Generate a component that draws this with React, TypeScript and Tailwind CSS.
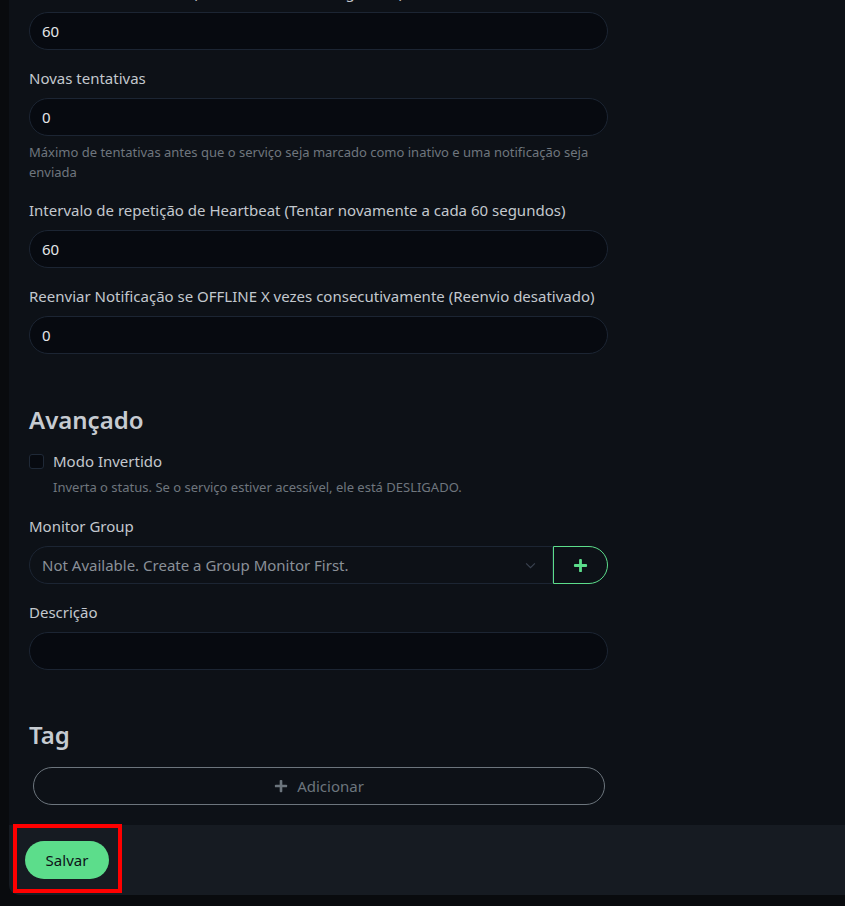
import React from "react";

const PlusIcon = ({ className }: { className?: string }) => (
  <svg viewBox="0 0 16 16" className={className} fill="currentColor">
    <rect x="6.5" y="1" width="3" height="14" rx="1" />
    <rect x="1" y="6.5" width="14" height="3" rx="1" />
  </svg>
);

function Field({ label, value, help }: { label: string; value: string; help?: string }) {
  return (
    <div className="mb-4">
      <div className="mb-2 h-6 leading-6 text-[15px] text-[#c3c8ce] whitespace-nowrap">{label}</div>
      <div className="h-[38px] w-[579px] rounded-full border border-[#1c2533] bg-[#070a10] pl-3 flex items-center text-[15px] text-[#e4e6e9]">
        {value}
      </div>
      {help && (
        <div className="mt-[6px] w-[579px] text-[13px] leading-[20px] text-[#6f767e]">{help}</div>
      )}
    </div>
  );
}

export default function App() {
  return (
    <div className="h-[906px] overflow-hidden bg-[#090b0e] pl-[9px] font-['Noto_Sans',sans-serif]">
      <div className="relative bg-[#0d1117] rounded-bl-[10px]">
        <div className="pl-5 pb-5 -mt-5">
          <Field label="Intervalo de Heartbeat (Verificar a cada 60 segundos)" value="60" />
          <Field
            label="Novas tentativas"
            value="0"
            help="Máximo de tentativas antes que o serviço seja marcado como inativo e uma notificação seja enviada"
          />
          <Field label="Intervalo de repetição de Heartbeat (Tentar novamente a cada 60 segundos)" value="60" />
          <Field label="Reenviar Notificação se OFFLINE X vezes consecutivamente (Reenvio desativado)" value="0" />

          <h2 className="mt-[51px] h-[29px] leading-[29px] text-[24px] font-semibold text-[#c6cbd1]">Avançado</h2>

          <div className="mt-[15px]">
            <div className="flex items-center h-6">
              <div className="w-[15px] h-[15px] rounded-[3px] border border-[#1f2937] bg-[#070a10]" />
              <span className="ml-[9px] text-[15px] text-[#c3c8ce]">Modo Invertido</span>
            </div>
            <div className="mt-1 pl-6 text-[13px] leading-[21px] text-[#6f767e]">
              Inverta o status. Se o serviço estiver acessível, ele está DESLIGADO.
            </div>
          </div>

          <div className="mt-4 mb-2 h-6 leading-6 text-[15px] text-[#c3c8ce]">Monitor Group</div>
          <div className="flex w-[579px] h-[38px]">
            <div className="flex-1 flex items-center justify-between rounded-l-full border border-[#1c2533] bg-[#0d1117] pl-3 pr-4 text-[15px] text-[#8a9098]">
              <span>Not Available. Create a Group Monitor First.</span>
              <svg viewBox="0 0 12 8" className="w-[11px] h-[7px]" fill="none" stroke="#3a4250" strokeWidth="1.3">
                <path d="M1 1.5l5 5 5-5" />
              </svg>
            </div>
            <div className="w-[55px] flex items-center justify-center rounded-r-full border border-[#5cdd8b] text-[#5cdd8b]">
              <PlusIcon className="w-[15px] h-[15px]" />
            </div>
          </div>

          <div className="mt-4 mb-2 h-6 leading-6 text-[15px] text-[#c3c8ce]">Descrição</div>
          <div className="h-[38px] w-[579px] rounded-full border border-[#1c2533] bg-[#070a10]" />

          <h2 className="mt-[50px] h-[29px] leading-[29px] text-[24px] font-semibold text-[#c6cbd1]">Tag</h2>

          <div className="mt-[18px] ml-1 w-[572px] h-[38px] rounded-full border border-[#6c757d] flex items-center justify-center gap-[9px] text-[15px] text-[#6c757d]">
            <PlusIcon className="w-[14px] h-[14px]" />
            <span>Adicionar</span>
          </div>
        </div>

        <div className="relative h-[70px] bg-[#161b22] rounded-bl-[10px] pl-4 pt-4">
          <div className="w-[84px] h-[38px] rounded-full bg-[#5cdd8b] flex items-center justify-center text-[15px] text-[#0d1117]">
            Salvar
          </div>
          <div className="absolute left-[4px] top-[-1px] w-[109px] h-[69px] border-4 border-[#ff0000]" />
        </div>
      </div>
    </div>
  );
}
